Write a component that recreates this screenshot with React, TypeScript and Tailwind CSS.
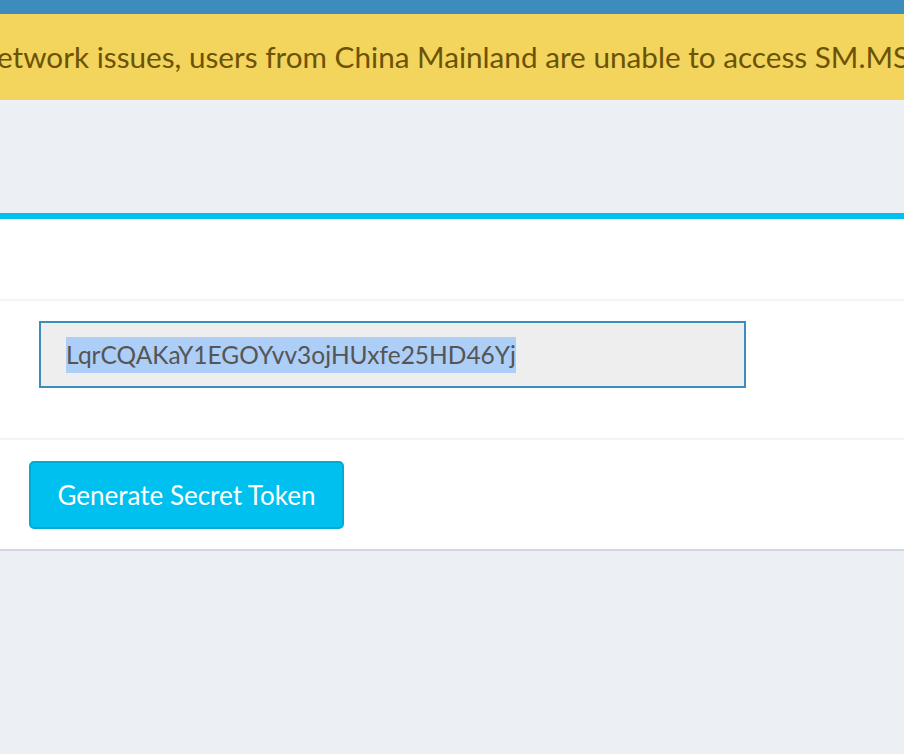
export default function App() {
  return (
    <div className="min-h-[754px] bg-[#ecf0f5] font-['Lato','Noto_Sans',sans-serif]">
      <div className="h-[14px] bg-[#3c8dbc]" />
      <div className="flex h-[86px] items-center overflow-hidden bg-[#f3d45d]">
        <p className="-ml-[3px] whitespace-nowrap text-[29.7px] text-[#6b5306]">
          etwork issues, users from China Mainland are unable to access SM.MS
        </p>
      </div>
      <div className="pt-[113px]">
        <div className="border-t-[6px] border-[#00c0ef] bg-white shadow-[0_2px_0_#d2d6de]">
          <div className="h-[82px] border-b-2 border-[#f4f4f4]" />
          <div className="border-b-2 border-[#f4f4f4] pt-[20px] pb-[50px] pl-[39px]">
            <div className="flex h-[67px] w-[707px] items-center border-2 border-[#3c8dbc] bg-[#eeeeee] pl-[25px]">
              <span className="bg-[#accef7] text-[24.5px] leading-[36px] text-[#555555]">
                LqrCQAKaY1EGOYvv3ojHUxfe25HD46Yj
              </span>
            </div>
          </div>
          <div className="pt-[21px] pb-[20px] pl-[29px]">
            <button className="h-[68px] w-[315px] rounded-[5px] border-2 border-[#00acd6] bg-[#00c0ef] text-[26px] text-white">
              Generate Secret Token
            </button>
          </div>
        </div>
      </div>
    </div>
  );
}
